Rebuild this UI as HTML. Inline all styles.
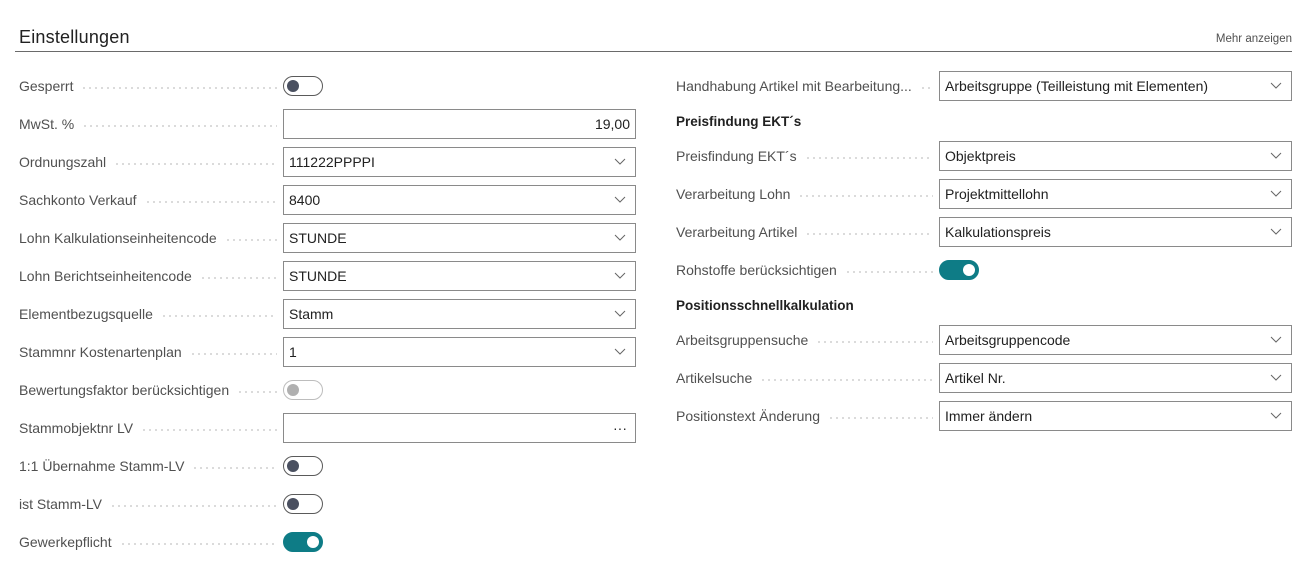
<!DOCTYPE html>
<html><head><meta charset="utf-8"><style>
*{box-sizing:border-box;margin:0;padding:0}
body{width:1311px;height:571px;background:#fff;font-family:"Liberation Sans",sans-serif;font-size:14px;color:#212121;position:relative;overflow:hidden}
.title{position:absolute;left:19px;top:27px;font-size:18px;color:#212121;letter-spacing:0.2px}
.more{position:absolute;right:19px;top:33px;font-size:11.5px;color:#505050}
.hr{position:absolute;left:15px;right:19px;top:51px;height:1px;background:#6a6a6a}
.lbl{position:absolute;color:#505050;white-space:nowrap;display:flex;align-items:center;height:20px}
.lbl .d{flex:1;height:2px;margin:4px 6px 0 8px;background:radial-gradient(circle,#cfcfcf 0.8px,transparent 1px) 0 0/6px 2px repeat-x}
.sec{position:absolute;font-weight:bold;color:#212121;font-size:13.5px}
.in{position:absolute;height:30px;border:1px solid #8a8a8a;background:#fff;padding:0 5px;line-height:29px;color:#212121}
.in svg{position:absolute;right:9px;top:10px}
.tg{position:absolute;width:40px;height:20px;border:1px solid #5a5a5a;border-radius:10px}
.tg::after{content:"";position:absolute;left:3px;top:3px;width:12px;height:12px;border-radius:50%;background:#4a5060}
.tg.on{background:#0e7c86;border-color:#0e7c86}
.tg.on::after{left:23px;background:#fff}
.tg.dis{border-color:#bdbdbd}
.tg.dis::after{background:#b0b0b0}
</style></head><body>
<div class="title">Einstellungen</div>
<div class="more">Mehr anzeigen</div>
<div class="hr"></div>

<div class="lbl" style="left:19px;top:76px;width:264px">Gesperrt<span class="d"></span></div>
<div class="tg" style="left:283px;top:76px"></div>
<div class="lbl" style="left:19px;top:114px;width:264px">MwSt. %<span class="d"></span></div>
<div class="in" style="left:283px;top:109px;width:353px;text-align:right">19,00</div>
<div class="lbl" style="left:19px;top:152px;width:264px">Ordnungszahl<span class="d"></span></div>
<div class="in" style="left:283px;top:147px;width:353px">111222PPPPI<svg width="12" height="8"><path d="M1 1l5 5 5-5" fill="none" stroke="#666"/></svg></div>
<div class="lbl" style="left:19px;top:190px;width:264px">Sachkonto Verkauf<span class="d"></span></div>
<div class="in" style="left:283px;top:185px;width:353px">8400<svg width="12" height="8"><path d="M1 1l5 5 5-5" fill="none" stroke="#666"/></svg></div>
<div class="lbl" style="left:19px;top:228px;width:264px">Lohn Kalkulationseinheitencode<span class="d"></span></div>
<div class="in" style="left:283px;top:223px;width:353px">STUNDE<svg width="12" height="8"><path d="M1 1l5 5 5-5" fill="none" stroke="#666"/></svg></div>
<div class="lbl" style="left:19px;top:266px;width:264px">Lohn Berichtseinheitencode<span class="d"></span></div>
<div class="in" style="left:283px;top:261px;width:353px">STUNDE<svg width="12" height="8"><path d="M1 1l5 5 5-5" fill="none" stroke="#666"/></svg></div>
<div class="lbl" style="left:19px;top:304px;width:264px">Elementbezugsquelle<span class="d"></span></div>
<div class="in" style="left:283px;top:299px;width:353px">Stamm<svg width="12" height="8"><path d="M1 1l5 5 5-5" fill="none" stroke="#666"/></svg></div>
<div class="lbl" style="left:19px;top:342px;width:264px">Stammnr Kostenartenplan<span class="d"></span></div>
<div class="in" style="left:283px;top:337px;width:353px">1<svg width="12" height="8"><path d="M1 1l5 5 5-5" fill="none" stroke="#666"/></svg></div>
<div class="lbl" style="left:19px;top:380px;width:264px">Bewertungsfaktor berücksichtigen<span class="d"></span></div>
<div class="tg dis" style="left:283px;top:380px"></div>
<div class="lbl" style="left:19px;top:418px;width:264px">Stammobjektnr LV<span class="d"></span></div>
<div class="in" style="left:283px;top:413px;width:353px;text-align:right;padding-right:8px">···</div>
<div class="lbl" style="left:19px;top:456px;width:264px">1:1 Übernahme Stamm-LV<span class="d"></span></div>
<div class="tg" style="left:283px;top:456px"></div>
<div class="lbl" style="left:19px;top:494px;width:264px">ist Stamm-LV<span class="d"></span></div>
<div class="tg" style="left:283px;top:494px"></div>
<div class="lbl" style="left:19px;top:532px;width:264px">Gewerkepflicht<span class="d"></span></div>
<div class="tg on" style="left:283px;top:532px"></div>

<div class="lbl" style="left:676px;top:76px;width:263px">Handhabung Artikel mit Bearbeitung...<span class="d"></span></div>
<div class="in" style="left:939px;top:71px;width:353px">Arbeitsgruppe (Teilleistung mit Elementen)<svg width="12" height="8"><path d="M1 1l5 5 5-5" fill="none" stroke="#666"/></svg></div>
<div class="sec" style="left:676px;top:114px">Preisfindung EKT´s</div>
<div class="lbl" style="left:676px;top:146px;width:263px">Preisfindung EKT´s<span class="d"></span></div>
<div class="in" style="left:939px;top:141px;width:353px">Objektpreis<svg width="12" height="8"><path d="M1 1l5 5 5-5" fill="none" stroke="#666"/></svg></div>
<div class="lbl" style="left:676px;top:184px;width:263px">Verarbeitung Lohn<span class="d"></span></div>
<div class="in" style="left:939px;top:179px;width:353px">Projektmittellohn<svg width="12" height="8"><path d="M1 1l5 5 5-5" fill="none" stroke="#666"/></svg></div>
<div class="lbl" style="left:676px;top:222px;width:263px">Verarbeitung Artikel<span class="d"></span></div>
<div class="in" style="left:939px;top:217px;width:353px">Kalkulationspreis<svg width="12" height="8"><path d="M1 1l5 5 5-5" fill="none" stroke="#666"/></svg></div>
<div class="lbl" style="left:676px;top:260px;width:263px">Rohstoffe berücksichtigen<span class="d"></span></div>
<div class="tg on" style="left:939px;top:260px"></div>
<div class="sec" style="left:676px;top:298px">Positionsschnellkalkulation</div>
<div class="lbl" style="left:676px;top:330px;width:263px">Arbeitsgruppensuche<span class="d"></span></div>
<div class="in" style="left:939px;top:325px;width:353px">Arbeitsgruppencode<svg width="12" height="8"><path d="M1 1l5 5 5-5" fill="none" stroke="#666"/></svg></div>
<div class="lbl" style="left:676px;top:368px;width:263px">Artikelsuche<span class="d"></span></div>
<div class="in" style="left:939px;top:363px;width:353px">Artikel Nr.<svg width="12" height="8"><path d="M1 1l5 5 5-5" fill="none" stroke="#666"/></svg></div>
<div class="lbl" style="left:676px;top:406px;width:263px">Positionstext Änderung<span class="d"></span></div>
<div class="in" style="left:939px;top:401px;width:353px">Immer ändern<svg width="12" height="8"><path d="M1 1l5 5 5-5" fill="none" stroke="#666"/></svg></div>
</body></html>
